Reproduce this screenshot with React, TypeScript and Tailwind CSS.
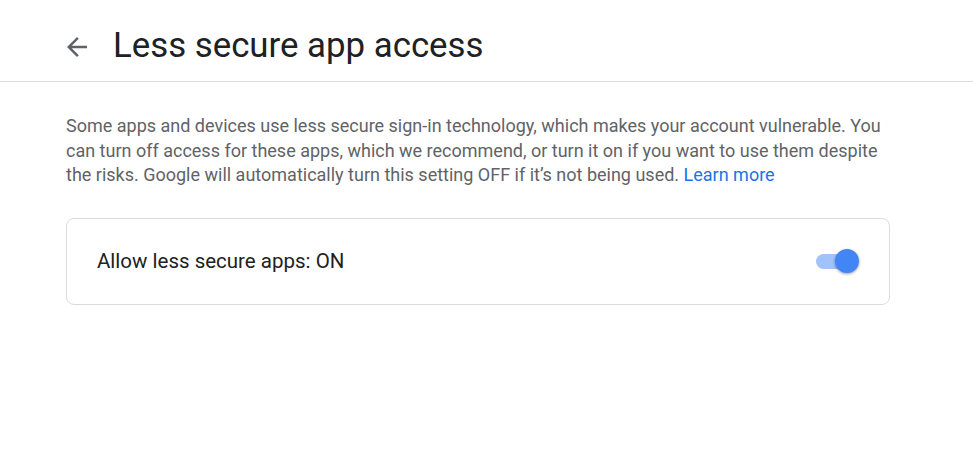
import React, { useState } from "react";

function BackArrow() {
  return (
    <svg width="30" height="30" viewBox="0 0 24 24" className="text-[#5f6368]">
      <path
        fill="currentColor"
        d="M20 11H7.83l5.59-5.59L12 4l-8 8 8 8 1.41-1.41L7.83 13H20v-2z"
      />
    </svg>
  );
}

function Toggle({ on, onChange }: { on: boolean; onChange: () => void }) {
  return (
    <button
      onClick={onChange}
      aria-label="Allow less secure apps"
      className="relative flex h-6 w-[46px] items-center"
    >
      <span
        className={`ml-[2px] h-[15px] w-[36px] rounded-full ${
          on ? "bg-[#a1c2fa]" : "bg-[#bdc1c6]"
        }`}
      />
      <span
        className={`absolute top-0 h-6 w-6 rounded-full shadow-[0_1px_3px_rgba(0,0,0,0.4)] ${
          on ? "left-[21px] bg-[#4285f4]" : "left-0 bg-white"
        }`}
      />
    </button>
  );
}

export default function App() {
  const [on, setOn] = useState(true);

  return (
    <div className="min-h-[467px] bg-white font-['Roboto',sans-serif]">
      <header className="flex h-[82px] items-center border-b border-[#dadce0] pl-[62px] pt-[13px]">
        <BackArrow />
        <h1 className="ml-[21px] text-[34.8px] leading-none text-[#202124] pb-1">
          Less secure app access
        </h1>
      </header>

      <main className="w-[824px] pl-[66px] pt-[32px] box-content">
        <p className="text-[18px] leading-[24.5px] text-[#5f6368]">
          Some apps and devices use less secure sign-in technology, which makes
          your account vulnerable. You can turn off access for these apps, which
          we recommend, or turn it on if you want to use them despite the risks.
          Google will automatically turn this setting OFF if it’s not being
          used.{" "}
          <a href="#" className="text-[#1a73e8]">
            Learn more
          </a>
        </p>

        <div className="mt-[30px] flex h-[87px] items-center justify-between rounded-lg border border-[#dadce0] pl-[30px] pr-[29px]">
          <span className="text-[20.5px] text-[#202124]">
            Allow less secure apps: {on ? "ON" : "OFF"}
          </span>
          <Toggle on={on} onChange={() => setOn((v) => !v)} />
        </div>
      </main>
    </div>
  );
}
